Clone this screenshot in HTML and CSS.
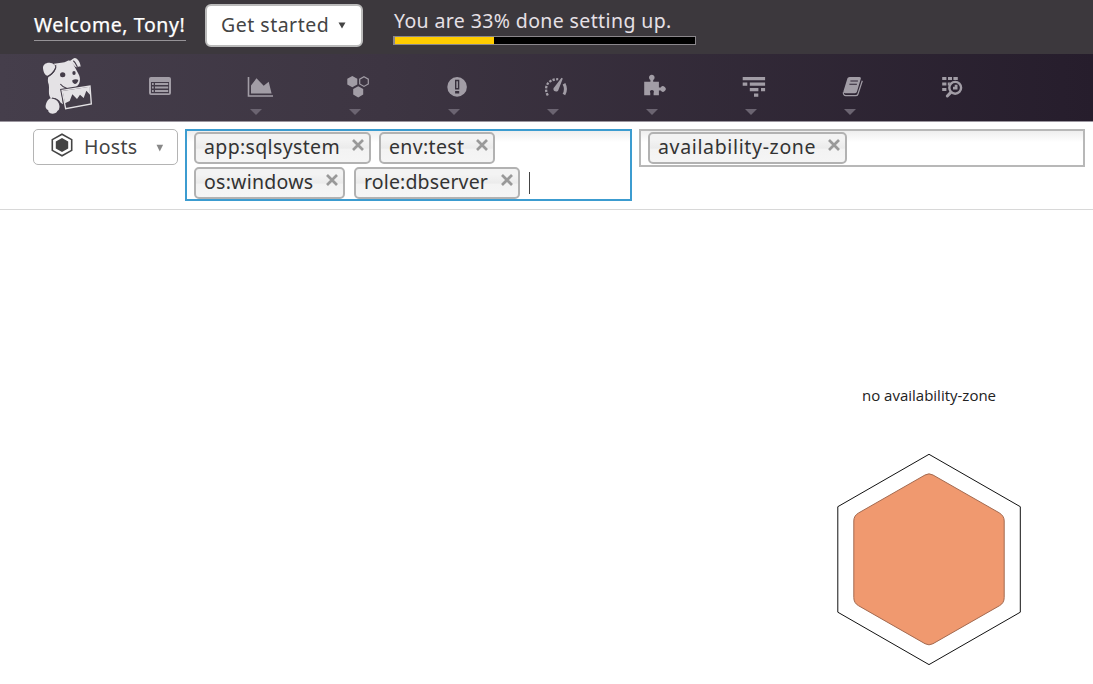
FILE: index.html
```html
<!DOCTYPE html>
<html lang="en">
<head>
<meta charset="utf-8">
<title>Host Map</title>
<link rel="stylesheet" href="styles.css">
</head>
<body>
<header class="topbar">
  <a class="welcome">Welcome, Tony!</a>
  <button class="get-started"><span class="gs-label">Get started</span><svg class="gs-caret" width="8" height="7" viewBox="0 0 8 7"><path d="M.5.5h7L4 6.5z"/></svg></button>
  <div class="setup">
    <div class="setup-text">You are 33% done setting up.</div>
    <div class="progress"><div class="progress-fill" style="width:33%"></div></div>
  </div>
</header>
<nav class="nav">
  <svg class="logo" width="70" height="64" viewBox="0 0 210 192">
    <path class="fur" d="M39 43C38 31 51 24 62 27C75 29 79 39 72 48C67 56 60 64 53 65C46 65 41 58 39 43z"/>
    <path class="fur" d="M72 29C86 27 102 27 112 21C119 18 124 21 129 29L144 57C151 68 151 79 148 87C143 98 131 105 121 103L93 108L99 151L92 146C85 134 75 130 62 133C53 120 59 105 56 91C53 84 53 76 55 69C64 64 76 54 77 42z"/>
    <path class="fur" d="M120 19C124 21 128 13 134 12C143 13 151 24 152 38C145 37 142 42 136 38C130 34 125 25 120 19z"/>
    <path class="fur" d="M61 133C77 130 89 141 90 157C90 164 86 169 82 171C80 178 68 181 61 178C56 175 54 172 55 169C47 166 45 158 48 150C51 142 54 137 61 133z"/>
    <path class="ink-line" d="M77 33C80 43 71 57 55 67M130 20C137 25 139 32 142 39M91 90C101 104 121 108 134 101M66 132C84 134 94 150 89 168"/>
    <ellipse class="ink" cx="98" cy="62" rx="8" ry="7.500"/>
    <ellipse class="ink" cx="132" cy="57" rx="5" ry="6"/>
    <path class="ink" d="M127 79C133 75 141 75 145 78C144 85 140 90 134 90C129 88 126 84 127 79z"/>
    <path class="sheet-gap" d="M96 109L180 96L184 150L107 164z"/>
    <path class="sheet" d="M96 109L180 96L184 150L107 164z"/>
    <path class="fur" d="M98 111L179 98L180 122L169 110L161 132L150 122L141 135L127 121L119 141L105 148z"/>
  </svg>
  <ul class="menu">
    <li><svg class="icon" viewBox="144 71 32 32"><path fill-rule="evenodd" d="M151 77h18a2 2 0 0 1 2 2v14a2 2 0 0 1-2 2h-18a2 2 0 0 1-2-2V79a2 2 0 0 1 2-2zM151 82v11.2h18V82z"/><path d="M152 83h1.7v2H152zm0 3.5h1.7v2H152zm0 3.5h1.7v2H152zM155 83h13.2v2H155zm0 3.5h13.2v2H155zm0 3.5h13.2v2H155z"/></svg></li>
    <li><svg class="icon" viewBox="243 71 32 32"><path d="M247.7 77h1.6v18.2H273v1.6h-25.3zM251 93.5v-8l5.5-7.2 7.2 7.4 5-4 2.9 11.8z"/></svg><i class="caret"></i></li>
    <li><svg class="icon" viewBox="342 71 32 32"><path d="M352.3 76l5 2.8v5.6l-5 2.8-5-2.8v-5.6zM358.2 86.2l5 2.8v5.6l-5 2.8-5-2.8V89z"/><path class="thin" d="M364 76.7l4.3 2.5v4.7l-4.3 2.5-4.3-2.5v-4.7z"/></svg><i class="caret"></i></li>
    <li><svg class="icon" viewBox="441 71 32 32"><circle cx="457.1" cy="86.9" r="9.8"/><path class="bang" d="M455.700 80.500h2.900v8.200h-2.900z"/><path class="bang-dot" d="M455.100 91h4.100v2.500h-4.100z"/></svg><i class="caret"></i></li>
    <li><svg class="icon" viewBox="540 71 32 32"><path class="dash" d="M547.8 95.5C543.6 88 547 79.2 558.2 79.2"/><path class="thick" d="M564 83.8c1.8 3.4 1.8 7.6-.1 10.7"/><path d="M561.500 77.800l1.300.600-4.400 11.500c-.7 2.500-4.800 2-5-.6-.1-1 .6-1.8.9-2.1z"/></svg><i class="caret"></i></li>
    <li><svg class="icon" viewBox="639 71 32 32"><path d="M644.2 81.8h6.2v-1.9a2.8 2.8 0 1 1 2.8 0v1.9h5.7v5.7h1.8a2.7 2.7 0 1 1 0 3h-1.8v4.8h-5.3v-2.4c2-3.9-5.3-3.9-3.3 0v2.4h-6.1z"/></svg><i class="caret"></i></li>
    <li><svg class="icon" viewBox="738 71 32 32"><path d="M742.7 77h22.4v3.2h-22.4zm0 5.6h4.6v3.2h-4.6zm7.1 0h15.3v3.2h-15.3zm0 5.5h8.6v3.2h-8.6zm11.2 0h4.1v3.2H761zm-7 5.5h4.3v3.1H754z"/></svg><i class="caret"></i></li>
    <li><svg class="icon" viewBox="837 71 32 32"><path d="M849.7 77h9.8c1 0 1.6.8 1.3 1.8L857 91.6c-.3 1-1.1 1.6-2 1.6h-9.6c-1.6 0-2.3-.8-1.9-2.1l3.8-12.3c.3-1.1 1.3-1.8 2.4-1.8z"/><path class="thin" d="M843.4 92.2c-.3 2 .7 3.5 2.4 3.5h9.8c1.2 0 2-.6 2.3-1.5l4.4-13.4"/><path class="cut" d="M850.4 81h7.5M849.4 84.2h7.5"/></svg><i class="caret"></i></li>
    <li><svg class="icon" viewBox="936 71 32 32"><path d="M942.2 77h4.2v3.1h-4.2zm5.8 0h4v3.1h-4zm5.4 0h4.4v3.1h-4.4zm-11.2 5.5h4.2v3.1h-4.2zm5.6 0h2.4l-1.5 3.1h-.9zm-5.6 5.5h4.2v3.1h-4.2zM953 89.5v-2.8h1.7v-2h2.8v4.8z"/><circle class="lens" cx="955.2" cy="87.8" r="5.9"/><path class="handle" d="M950.8 92.4l-3.5 3.6"/></svg></li>
  </ul>
</nav>
<section class="filters">
  <button class="hosts"><svg class="hosts-icon" width="22" height="24" viewBox="0 0 22 24"><path class="hex-line" d="M11 1.2l9.7 5.4v10.8L11 22.8l-9.7-5.4V6.6z"/><path class="hex-core" d="M11 5l6.2 3.4v7.2L11 19l-6.2-3.4V8.4z"/></svg><span class="hosts-label">Hosts</span><svg class="hosts-caret" width="8" height="8" viewBox="0 0 8 8"><path d="M.5.8h6.6L3.8 7.4z"/></svg></button>
  <div class="field focused">
    <span class="tag t-app"><span class="tag-text">app:sqlsystem</span><svg class="x" viewBox="0 0 12 12"><path d="M1 1l10 10M11 1L1 11"/></svg></span>
    <span class="tag t-env"><span class="tag-text">env:test</span><svg class="x" viewBox="0 0 12 12"><path d="M1 1l10 10M11 1L1 11"/></svg></span>
    <span class="tag t-os"><span class="tag-text">os:windows</span><svg class="x" viewBox="0 0 12 12"><path d="M1 1l10 10M11 1L1 11"/></svg></span>
    <span class="tag t-role"><span class="tag-text">role:dbserver</span><svg class="x" viewBox="0 0 12 12"><path d="M1 1l10 10M11 1L1 11"/></svg></span>
    <span class="cursor"></span>
  </div>
  <div class="field">
    <span class="tag t-zone"><span class="tag-text">availability-zone</span><svg class="x" viewBox="0 0 12 12"><path d="M1 1l10 10M11 1L1 11"/></svg></span>
  </div>
</section>
<main class="map">
  <div class="group">
    <div class="group-name">no availability-zone</div>
    <svg class="host" width="184" height="212" viewBox="837 454 184 212">
      <path class="outer" d="M929 454.3L1020.3 506.7V612.2L929 664.6L837.8 612.2V506.7z"/>
      <path class="inner" d="M925 475Q929 472.700 933 475L999 512.700Q1004.200 515.700 1004.200 521V597.500Q1004.200 603 999.500 605.700L933 643.700Q929 646 925 643.700L858.500 605.700Q853.800 603 853.800 597.500V521Q853.800 515.700 858.500 513z"/>
    </svg>
  </div>
</main>
</body>
</html>
```

FILE: styles.css
```css
* { box-sizing: border-box; }
body { margin: 0; width: 1093px; height: 684px; overflow: hidden; background: #fff; color: #333; font: 19.5px/26px "Noto Sans", "Open Sans", sans-serif; }
button { font: inherit; color: #444; background: #fff; padding: 0; }
.topbar { height: 54px; display: flex; align-items: flex-start; padding-left: 34px; background: #3c383d; color: #fff; }
.welcome { width: 152px; height: 29px; margin-top: 12px; border-bottom: 1px solid #969397; white-space: nowrap; letter-spacing: .6px; -webkit-text-stroke: .25px #fff; }
.get-started { width: 158px; height: 43px; margin: 4px 0 0 19px; padding: 0 0 2px 14px; display: flex; align-items: center; border: 2px solid #bbb; border-radius: 6px; }
.gs-label { width: 109px; margin-right: 8px; text-align: left; white-space: nowrap; letter-spacing: .5px; }
.gs-caret { fill: #444; margin-top: 2px; }
.setup { width: 303px; margin: 8px 0 0 30px; }
.setup-text { height: 28px; padding-left: 1px; white-space: nowrap; color: #e6e0e6; letter-spacing: .38px; }
.progress { height: 9px; border: 1px solid #8b878c; border-left-width: 2px; background: #000; }
.progress-fill { height: 100%; background: #fc0; }

.nav { height: 68px; display: flex; border-bottom: 1px solid #9b969f; background: linear-gradient(90deg, #453e4b, #3d3542 35%, #261d2c); }
.logo { margin-left: 30px; flex: none; }
.fur { fill: #e4e2e5; }
.ink { fill: #443d49; }
.ink-line { fill: none; stroke: #443d49; stroke-width: 3.5; }
.sheet-gap { fill: #443d49; stroke: #443d49; stroke-width: 10; }
.sheet { fill: #443d49; stroke: #e4e2e5; stroke-width: 4; }
.menu { list-style: none; margin: 0 0 0 10px; padding: 0; display: grid; grid-template-columns: repeat(9, 99px); }
.menu li { display: flex; flex-direction: column; align-items: flex-start; padding: 17px 0 0 34px; }
.icon { width: 32px; height: 32px; fill: #a29da6; }
.caret { width: 12px; height: 6px; margin: 6px 0 0 7px; background: #6b6471; clip-path: polygon(0 0, 100% 0, 50% 100%); }
.thin { fill: none; stroke: #a29da6; stroke-width: 1.2; }
.bang { fill: #a29da6; stroke: #38303d; stroke-width: 1.4; }
.bang-dot { fill: #38303d; }
.dash { fill: none; stroke: #a29da6; stroke-width: 2.3; stroke-dasharray: 2.4 1.3; }
.thick { fill: none; stroke: #a29da6; stroke-width: 3; }
.cut { stroke: #2e2534; stroke-width: 1.1; }
.lens { fill: none; stroke: #a29da6; stroke-width: 2.4; }
.handle { stroke: #a29da6; stroke-width: 3; stroke-linecap: round; }

.filters { height: 88px; display: flex; align-items: flex-start; gap: 8px; padding: 7px 8px 0 33px; border-bottom: 1px solid #d8d8d8; }
.hosts { width: 145px; height: 36px; flex: none; margin-right: -1px; display: flex; align-items: flex-start; border: 1.5px solid #b4b4b4; border-radius: 5px; }
.hosts-icon { margin: 3px 0 0 17px; }
.hex-line { fill: none; stroke: #444; stroke-width: 1.6; }
.hex-core { fill: #444; }
.hosts-label { margin: 4px 0 0 11px; width: 54px; text-align: left; letter-spacing: .3px; }
.hosts-caret { margin: 14px 0 0 18px; fill: #888; }
.field { width: 446px; flex: none; display: flex; flex-wrap: wrap; align-items: flex-start; column-gap: 9px; row-gap: 2px; border: 2px solid #b8b8b8; padding: 1px 7px 0; height: 38px; background: linear-gradient(#eee, #fff 11px); }
.field.focused { width: 447px; height: 72px; border-color: #3c9cd0; margin-right: -1px; }
.tag { height: 32px; display: flex; align-items: flex-start; justify-content: space-between; padding: 0 5px 0 8px; border: 2px solid #b2b2b2; border-radius: 5px; background: linear-gradient(#f3f3f3 20%, #ebebeb 50%, #f3f3f3 55%, #f5f5f5); color: #333; }
.tag-text { white-space: nowrap; letter-spacing: .35px; }
.x { width: 12px; height: 12px; margin-top: 5px; flex: none; stroke: #999; stroke-width: 2.7; }
.t-app { width: 177px; margin-right: -1px; }
.t-env { width: 116px; margin-right: 120px; }
.t-os { width: 151px; }
.t-os .tag-text { letter-spacing: .25px; }
.t-role { width: 166px; }
.t-role .tag-text { letter-spacing: .15px; }
.t-zone { width: 199px; }
.t-zone .tag-text { letter-spacing: .65px; }
.cursor { width: 1px; height: 22px; margin-top: 5px; background: #444; }

.map { display: flex; padding-left: 837px; }
.group { width: 184px; }
.group-name { margin-top: 173px; height: 71px; text-align: center; font: 15px/24px "Open Sans", sans-serif; color: #222; white-space: nowrap; }
.host { display: block; }
.outer { fill: none; stroke: #111; stroke-width: 1; }
.inner { fill: #f0996f; stroke: #a36a50; stroke-width: 1; }
```
